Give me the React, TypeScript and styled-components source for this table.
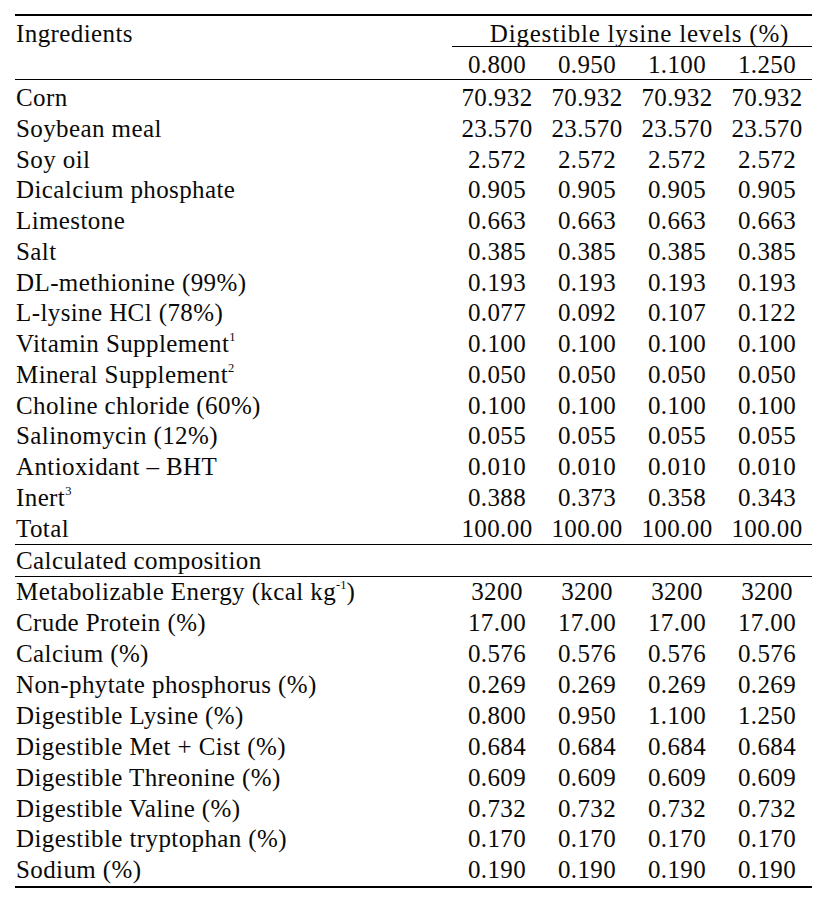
import React from 'react';
import styled, { createGlobalStyle } from 'styled-components';

const levels = ['0.800', '0.950', '1.100', '1.250'];

type Item = { name: string; note?: string; values: string[] };

const same = (v: string) => [v, v, v, v];

const ingredients: Item[] = [
  { name: 'Corn', values: same('70.932') },
  { name: 'Soybean meal', values: same('23.570') },
  { name: 'Soy oil', values: same('2.572') },
  { name: 'Dicalcium phosphate', values: same('0.905') },
  { name: 'Limestone', values: same('0.663') },
  { name: 'Salt', values: same('0.385') },
  { name: 'DL-methionine (99%)', values: same('0.193') },
  { name: 'L-lysine HCl (78%)', values: ['0.077', '0.092', '0.107', '0.122'] },
  { name: 'Vitamin Supplement', note: '1', values: same('0.100') },
  { name: 'Mineral Supplement', note: '2', values: same('0.050') },
  { name: 'Choline chloride (60%)', values: same('0.100') },
  { name: 'Salinomycin (12%)', values: same('0.055') },
  { name: 'Antioxidant – BHT', values: same('0.010') },
  { name: 'Inert', note: '3', values: ['0.388', '0.373', '0.358', '0.343'] },
];

const composition: Item[] = [
  { name: 'Crude Protein (%)', values: same('17.00') },
  { name: 'Calcium (%)', values: same('0.576') },
  { name: 'Non-phytate phosphorus (%)', values: same('0.269') },
  { name: 'Digestible Lysine (%)', values: levels },
  { name: 'Digestible Met + Cist (%)', values: same('0.684') },
  { name: 'Digestible Threonine (%)', values: same('0.609') },
  { name: 'Digestible Valine (%)', values: same('0.732') },
  { name: 'Digestible tryptophan (%)', values: same('0.170') },
  { name: 'Sodium (%)', values: same('0.190') },
];

// row metrics: [padding-top, content height]
type Kind = 'ingredient' | 'total' | 'composition';
const rowSize: Record<Kind, [number, number]> = {
  ingredient: [5.05, 25.69],
  total: [5, 28.45],
  composition: [2.55, 28.37],
};

const ItemRow = ({ item, kind }: { item: Item; kind: Kind }) => (
  <tr>
    <Label $kind={kind}>
      {item.name}
      {item.note && <Sup>{item.note}</Sup>}
    </Label>
    {item.values.map((v, i) => (
      <Value key={i} $kind={kind}>
        {v}
      </Value>
    ))}
  </tr>
);

export default function App() {
  return (
    <>
      <GlobalStyle />
      <Page>
        <Table>
          <colgroup>
            <col style={{ width: 437 }} />
            <col style={{ width: 90 }} />
            <col style={{ width: 90 }} />
            <col style={{ width: 90 }} />
            <col style={{ width: 90 }} />
          </colgroup>
          <thead>
            <tr>
              <HeadLabel>Ingredients</HeadLabel>
              <GroupHead colSpan={4}>Digestible lysine levels (%)</GroupHead>
            </tr>
            <tr>
              <LevelCell />
              {levels.map((l) => (
                <LevelCell key={l}>{l}</LevelCell>
              ))}
            </tr>
          </thead>
          <tbody>
            {ingredients.map((item) => (
              <ItemRow key={item.name} item={item} kind="ingredient" />
            ))}
            <ItemRow item={{ name: 'Total', values: same('100.00') }} kind="total" />
            <tr>
              <SectionCell colSpan={5}>Calculated composition</SectionCell>
            </tr>
            <tr>
              <Label $kind="composition">
                Metabolizable Energy (kcal kg<Sup>-1</Sup>)
              </Label>
              {levels.map((l) => (
                <Value key={l} $kind="composition">
                  3200
                </Value>
              ))}
            </tr>
            {composition.map((item) => (
              <ItemRow key={item.name} item={item} kind="composition" />
            ))}
          </tbody>
        </Table>
      </Page>
    </>
  );
}

const serif = '"Liberation Serif", Tinos, "Times New Roman", "DejaVu Serif", serif';

const GlobalStyle = createGlobalStyle`
  body {
    margin: 0;
    background: #fff;
    color: #000;
    font-family: ${serif};
  }
`;

const Page = styled.div`
  width: 824px;
  height: 900px;
  padding: 14px 0 0 15px;
  box-sizing: border-box;
`;

const Table = styled.table`
  width: 797px;
  table-layout: fixed;
  border-collapse: separate;
  border-spacing: 0;
  border-top: 2px solid #000;
  border-bottom: 2px solid #000;
  font-family: ${serif};
  font-size: 25px;
  line-height: 1;
  letter-spacing: 0.4px;
  color: #0a0a0a;
`;

const HeadLabel = styled.th`
  height: 26.7px;
  padding: 4.8px 0 0 1px;
  text-align: left;
  font-weight: normal;
  vertical-align: top;
`;

const GroupHead = styled.th`
  height: 25.7px;
  padding: 4.8px 0 0 15px;
  font-weight: normal;
  text-align: center;
  vertical-align: top;
  letter-spacing: 0.8px;
  border-bottom: 1px solid #000;
`;

const LevelCell = styled.th`
  height: 27.15px;
  padding: 4.6px 0 0;
  font-weight: normal;
  text-align: center;
  vertical-align: top;
  border-bottom: 1.5px solid #000;
`;

const Cell = styled.td<{ $kind: Kind }>`
  height: ${(p) => rowSize[p.$kind][1]}px;
  padding: ${(p) => rowSize[p.$kind][0]}px 0 0;
  vertical-align: top;
  white-space: nowrap;
  border-bottom: ${(p) => (p.$kind === 'total' ? '1.5px solid #000' : 'none')};
`;

const Label = styled(Cell)`
  padding-left: 1px;
  text-align: left;
`;

const Value = styled(Cell)`
  text-align: center;
`;

const SectionCell = styled.td`
  height: 27.65px;
  padding: 3.05px 0 0 1px;
  vertical-align: top;
  border-bottom: 1.5px solid #000;
`;

const Sup = styled.sup`
  font-size: 0.5em;
  line-height: 0;
  vertical-align: 0.9em;
  letter-spacing: 0;
`;
